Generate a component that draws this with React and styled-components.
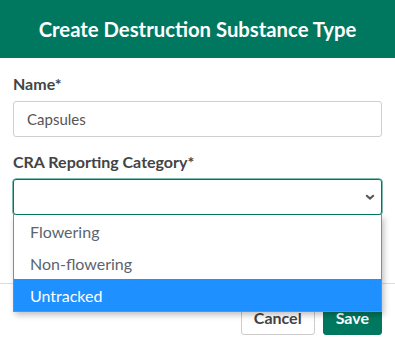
import styled, { createGlobalStyle } from 'styled-components';

const GlobalStyle = createGlobalStyle`
html, body {
  margin: 0;
  padding: 0;
  background: #ffffff;
  font-family: Lato, "Open Sans", sans-serif;
}
`;

const StyledModal = styled.div`
width: 395px;
height: 350px;
background-color: #ffffff;
box-sizing: border-box;
display: flex;
flex-direction: column;
overflow: hidden;
`;

const StyledHeader = styled.div`
height: 58px;
background-color: #00785f;
color: #ffffff;
display: flex;
align-items: center;
justify-content: center;
font-size: 20.3px;
font-weight: 700;
flex-shrink: 0;
`;

const StyledBody = styled.div`
padding: 16px 13px 0 13px;
height: 225px;
box-sizing: border-box;
display: flex;
flex-direction: column;
`;

const StyledLabel = styled.label`
font-size: 16px;
line-height: 20px;
font-weight: 700;
color: #444444;
margin-bottom: 7px;
`;

const StyledField = styled.div`
position: relative;
display: flex;
flex-direction: column;
margin-bottom: ${(props) => props.gap || 0}px;
`;

const StyledInput = styled.div`
height: 36px;
box-sizing: border-box;
border: 1px solid #cfcfcf;
border-radius: 3px;
padding: 0 13px;
display: flex;
align-items: center;
font-size: 15px;
color: #555555;
`;

const StyledSelect = styled(StyledInput)`
border-color: #00785f;
justify-content: flex-end;
padding: 0 6px;
box-shadow: 0 0 0 0.5px #00785f;
`;

const StyledList = styled.ul`
position: absolute;
top: 63px;
left: 0;
right: 0;
margin: 0;
padding: 0;
list-style: none;
background-color: #ffffff;
border: 1px solid #8a8a8a;
border-top: none;
box-shadow: 2px 3px 6px rgba(0, 0, 0, 0.25);
z-index: 2;
`;

const StyledOption = styled.li`
height: 32px;
padding: 0 16px;
display: flex;
align-items: center;
font-size: 16px;
color: ${(props) => (props.selected ? '#ffffff' : '#5b6470')};
background-color: ${(props) => (props.selected ? '#1e90ff' : '#ffffff')};
`;

const StyledFooter = styled.div`
border-top: 1px solid #dddddd;
padding: 15px 13px 0 13px;
display: flex;
justify-content: flex-end;
gap: 8px;
`;

const StyledButton = styled.button`
height: 36px;
box-sizing: border-box;
border-radius: 3px;
padding: 0 12px;
font-family: inherit;
font-size: 16px;
font-weight: 700;
border: 1px solid ${(props) => (props.primary ? '#00785f' : '#cccccc')};
background-color: ${(props) => (props.primary ? '#00785f' : '#ffffff')};
color: ${(props) => (props.primary ? '#ffffff' : '#444444')};
`;

function Chevron() {
  return (
    <svg width="10" height="6" viewBox="0 0 10 6">
      <path d="M1.2 1.2 L5 4.6 L8.8 1.2" fill="none" stroke="#555555" strokeWidth="2" />
    </svg>
  );
}

const options = ['Flowering', 'Non-flowering', 'Untracked'];

export default function App() {
  return (
    <>
      <GlobalStyle />
      <StyledModal>
        <StyledHeader>Create Destruction Substance Type</StyledHeader>
        <StyledBody>
          <StyledField gap={15}>
            <StyledLabel>Name*</StyledLabel>
            <StyledInput>Capsules</StyledInput>
          </StyledField>
          <StyledField>
            <StyledLabel>CRA Reporting Category*</StyledLabel>
            <StyledSelect>
              <Chevron />
            </StyledSelect>
            <StyledList>
              {options.map((o) => (
                <StyledOption key={o} selected={o === 'Untracked'}>{o}</StyledOption>
              ))}
            </StyledList>
          </StyledField>
        </StyledBody>
        <StyledFooter>
          <StyledButton>Cancel</StyledButton>
          <StyledButton primary>Save</StyledButton>
        </StyledFooter>
      </StyledModal>
    </>
  );
}
